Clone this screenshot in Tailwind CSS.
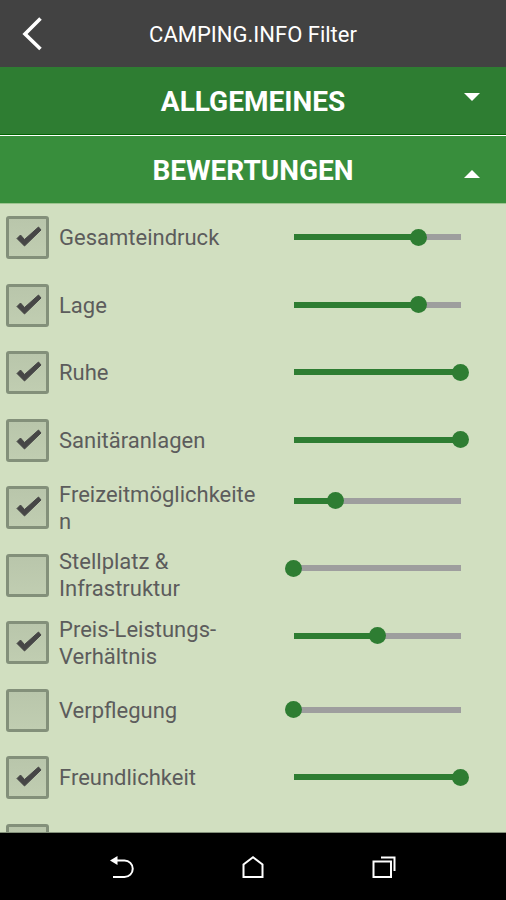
<!DOCTYPE html>
<html lang="de">
<head>
<meta charset="utf-8">
<meta name="viewport" content="width=device-width, initial-scale=1">
<title>CAMPING.INFO Filter</title>
<script src="https://cdn.jsdelivr.net/npm/@tailwindcss/browser@4"></script>
</head>
<body class="flex h-screen flex-col bg-[#d1dfc0] font-['Roboto',sans-serif]">
<header class="grid h-[67px] shrink-0 grid-cols-[64px_1fr_64px] items-center bg-[#424242] text-white">
  <button type="button" aria-label="Zurück" class="flex h-full items-center pl-5">
    <svg class="h-9 w-6" viewBox="0 0 24 36" fill="none" stroke="currentColor" stroke-width="3.6"><path d="M20.500 2.500 5 18 20.500 33"/></svg>
  </button>
  <h1 class="pt-[2px] text-center text-[22px] leading-7">CAMPING.INFO Filter</h1>
</header>
<button type="button" aria-expanded="false" class="grid h-[69px] shrink-0 grid-cols-[64px_1fr_64px] items-center border-b border-white bg-[#2e7d32] text-white shadow-[inset_0_-1px_0_#006400]">
  <span class="col-start-2 pt-[2px] text-[28px] leading-8 font-bold">ALLGEMEINES</span>
  <svg class="mb-2 ml-[22px] h-2 w-4" viewBox="0 0 16 8" fill="currentColor"><path d="M0 0H16L8 8Z"/></svg>
</button>
<button type="button" aria-expanded="true" class="grid h-[67px] shrink-0 grid-cols-[64px_1fr_64px] items-center bg-[#388e3c] text-white">
  <span class="col-start-2 pt-[2px] text-[28px] leading-8 font-bold">BEWERTUNGEN</span>
  <svg class="mt-2 ml-[22px] h-2 w-4" viewBox="0 0 16 8" fill="currentColor"><path d="M0 8H16L8 0Z"/></svg>
</button>
<main class="min-h-0 flex-1 overflow-y-auto border-y border-t-[#9dc48f] border-b-[#83907a] [scrollbar-width:none]">
  <ul id="ratings"></ul>
</main>
<nav class="flex h-[67px] shrink-0 items-center justify-center gap-[107px] bg-black text-white">
  <button type="button" aria-label="Zurück"><svg class="size-6" viewBox="0 0 24 24" fill="none" stroke="currentColor" stroke-width="2"><path d="M6 5.500H14.500A8.200 8.200 0 0 1 14.500 22H3"/><path d="M0 5.500 7.500 1V10Z" fill="currentColor" stroke="none"/></svg></button>
  <button type="button" aria-label="Startseite"><svg class="size-6" viewBox="0 0 24 24" fill="none" stroke="currentColor" stroke-width="2"><path d="M2.500 22V9.500L12 2.300 21.500 9.500V22Z"/></svg></button>
  <button type="button" aria-label="Letzte Apps"><svg class="size-6" viewBox="0 0 24 24" fill="none" stroke="currentColor" stroke-width="2"><path d="M1.500 6.500H19V22H1.500Z"/><path d="M9 2.500H22.500V16"/></svg></button>
</nav>
<script>
  // tall: the label takes two lines, so the slider sits a little higher
  const ratings = [
    { label: 'Gesamteindruck', on: true, value: 75 },
    { label: 'Lage', on: true, value: 75 },
    { label: 'Ruhe', on: true, value: 100 },
    { label: 'Sanitäranlagen', on: true, value: 100 },
    { label: 'Freizeitmöglichkeiten', on: true, value: 25, tall: true },
    { label: 'Stellplatz &amp; Infrastruktur', on: false, value: 0, tall: true },
    { label: 'Preis-Leistungs-Verhältnis', on: true, value: 50, tall: true },
    { label: 'Verpflegung', on: false, value: 0 },
    { label: 'Freundlichkeit', on: true, value: 100 },
    { label: '', on: false, value: 0 }
  ];
  document.getElementById('ratings').innerHTML = ratings.map((r, i) => `
    <li class="flex items-center pr-[37px] pl-[6px] odd:h-[67px] even:h-17">
      <span class="grid size-[43px] shrink-0 place-items-center">
        <input id="c${i}" type="checkbox" ${r.on ? 'checked' : ''} class="peer col-start-1 row-start-1 size-full appearance-none rounded-[3px] border-[3px] border-[#83907a] bg-linear-to-b from-[#b9c6ab] to-[#c0cdb1]">
        <svg class="pointer-events-none invisible col-start-1 row-start-1 mb-[2px] ml-[2px] h-[21px] w-[26px] peer-checked:visible" viewBox="0 0 26 21" fill="#464646" stroke="#464646" stroke-linejoin="round"><path d="M22.500 1 25 4 8.500 20 1 12.500 4.500 9 8.500 13.500Z"/></svg>
      </span>
      <label for="c${i}" class="ml-[10px] min-w-0 flex-1 text-[22px] leading-[27px] wrap-break-word text-[#5c5c5c]">${r.label}</label>
      <input type="range" min="0" max="100" step="25" value="${r.value}" aria-label="${r.label || 'Bewertung'}" style="--v:${r.value}%"
        class="${r.tall ? 'mb-[14px]' : 'mb-px'} ml-[22px] h-[17px] w-[40%] max-w-[184px] shrink-0 appearance-none bg-[linear-gradient(to_right,#2e7d32_var(--v),#9e9e9e_var(--v))] bg-[length:calc(100%-17px)_6px] bg-center bg-no-repeat [&::-webkit-slider-thumb]:size-[17px] [&::-webkit-slider-thumb]:appearance-none [&::-webkit-slider-thumb]:rounded-full [&::-webkit-slider-thumb]:bg-[#2e7d32]">
    </li>`).join('');
  document.querySelectorAll('input[type=range]').forEach(s =>
    s.addEventListener('input', () => s.style.setProperty('--v', s.value + '%')));
</script>
</body>
</html>
